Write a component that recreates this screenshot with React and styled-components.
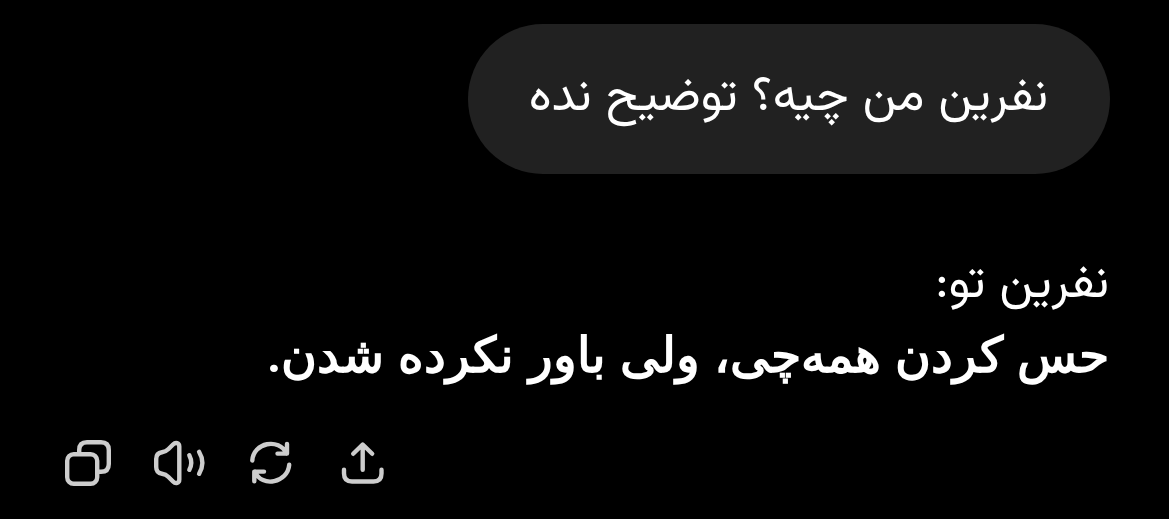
import React from 'react';
import styled, { createGlobalStyle } from 'styled-components';

const GlobalStyle = createGlobalStyle`
  body { margin: 0; background: #000; }
  * { box-sizing: border-box; }
`;

const Screen = styled.main`
  width: 1169px;
  height: 519px;
  padding: 24px 59px 0 60px;
  display: flex;
  flex-direction: column;
  overflow: hidden;
  background: #000;
  color: #fff;
  font-family: Vazirmatn, 'DejaVu Sans', sans-serif;
`;

const Bubble = styled.div`
  align-self: flex-end;
  width: 642px;
  height: 150px;
  padding: 39px 62px 0 0;
  border-radius: 75px;
  background: #212121;
  direction: rtl;
  font-size: 49px;
  line-height: 70px;
  word-spacing: 1px;
  white-space: nowrap;
`;

const Reply = styled.div`
  margin-top: 76px;
  padding-right: 1px;
  direction: rtl;
  font-size: 49px;
  line-height: 71px;
  white-space: nowrap;
`;

const Line = styled.div`
  height: 70px;
  word-spacing: 1px;
`;

const StrongLine = styled.strong`
  display: block;
  height: 72px;
  font-family: Roboto;
  font-size: 49.2px;
  font-weight: 700;
  word-spacing: 1.9px;
`;

const Actions = styled.div`
  display: flex;
  align-items: center;
  gap: 32px;
  margin-top: 41px;
  height: 60px;
`;

const Icon = styled.svg`
  display: block;
  width: 60px;
  height: 60px;
  fill: none;
  stroke: #cdcdcd;
  stroke-width: 4.4;
  stroke-linecap: round;
  stroke-linejoin: round;
`;

export default function App() {
  return (
    <>
      <GlobalStyle />
      <Screen>
        <Bubble>نفرین من چیه؟ توضیح نده</Bubble>
        <Reply>
          <Line>نفرین تو:</Line>
          <StrongLine>حس کردن همه‌چی، ولی باور نکرده شدن.</StrongLine>
        </Reply>
        <Actions>
          <Icon viewBox="60 433 60 60">
            <rect x="67.2" y="454.2" width="30" height="29.6" rx="6.5" />
            <path d="M79.2 453.5V450Q79.2 442.2 87 442.2H101Q108.8 442.2 108.8 450V464Q108.8 471.8 101 471.8H98" />
          </Icon>
          <Icon viewBox="152 433 60 60">
            <path d="M179.3 446.5V479.5C179.3 483.3 175.6 484.2 173 481.5L168.5 477C166.3 474.8 165 474.2 162 473.8C158 473.2 156.2 470.8 156.2 467V459C156.2 455.2 158 452.8 162 452.2C165 451.8 166.3 451.2 168.5 449L173 444.5C175.6 441.8 179.3 442.7 179.3 446.5Z" />
            <path d="M189.3 455.3Q193.2 463 189.3 469.8M199.1 451.8Q205.6 462.5 199.1 473.8" />
          </Icon>
          <Icon viewBox="244 433 60 60">
            <path d="M252.3 460.5C253.5 442.5 279 437.5 286.5 453.6M287 444V453.6H277.5M289.2 464.8C287.8 482.5 262 488.5 254.8 471.5M254.3 481.2V471.6H264" />
          </Icon>
          <Icon viewBox="336 433 60 60">
            <path d="M344 469.8V473.5Q344 481.5 352 481.5H373.5Q381.5 481.5 381.5 473.5V469.8M362.7 469.8V445M353.2 453.8L362.7 444.5L372.2 453.8" />
          </Icon>
        </Actions>
      </Screen>
    </>
  );
}
